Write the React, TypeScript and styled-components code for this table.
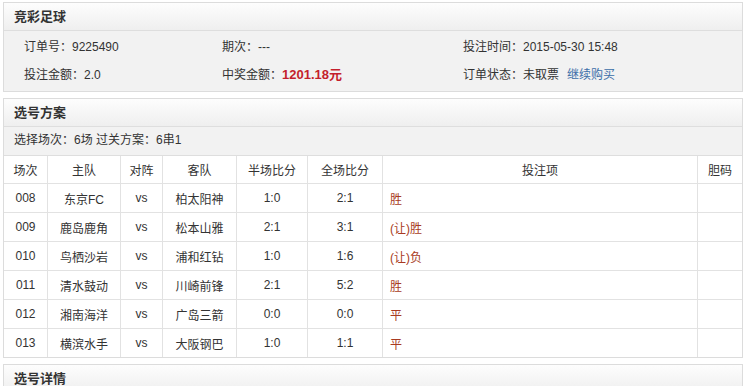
import React from 'react';
import styled, { createGlobalStyle } from 'styled-components';

const GlobalStyle = createGlobalStyle`
  html, body {
    margin: 0;
    padding: 0;
    background: #ffffff;
  }
  body {
    font-family: "Liberation Sans", "Noto Sans CJK SC", sans-serif;
    font-size: 12px;
    color: #333;
  }
`;

const Page = styled.div`
  padding: 2px 2px 0 3px;
  display: flex;
  flex-direction: column;
  gap: 6px;
`;

const Panel = styled.div`
  border: 1px solid #dcdcdc;
  background: #f2f2f2;
`;

const PanelTitle = styled.div`
  height: 27px;
  line-height: 27px;
  padding-left: 10px;
  font-weight: bold;
  font-size: 13px;
  color: #333;
  background: linear-gradient(#fdfdfd, #efefef);
  border-bottom: 1px solid #dedede;
`;

const InfoGrid = styled.div`
  display: grid;
  grid-template-columns: 198px 241px 1fr;
  padding: 2px 0 2px 20px;
`;

const InfoCell = styled.div`
  height: 28px;
  line-height: 28px;
`;

const Prize = styled.span`
  color: #c41f2c;
  font-weight: bold;
  font-size: 13px;
`;

const BuyLink = styled.a`
  color: #3b6ea8;
  text-decoration: none;
  margin-left: 8px;
`;

const SubLine = styled.div`
  height: 28px;
  line-height: 27px;
  padding-left: 10px;
  border-bottom: 1px solid #dedede;
`;

const Table = styled.table`
  width: 100%;
  border-collapse: collapse;
  table-layout: fixed;
  background: #fff;
`;

const Th = styled.th<{ $w?: number }>`
  width: ${(p) => (p.$w ? `${p.$w}px` : 'auto')};
  height: 27px;
  font-weight: normal;
  text-align: center;
  border-right: 1px solid #e2e2e2;
  border-bottom: 1px solid #e2e2e2;
  padding: 0;
  &:last-child {
    border-right: none;
  }
`;

const Td = styled.td<{ $bet?: boolean }>`
  height: 28px;
  padding: ${(p) => (p.$bet ? '0 0 0 7px' : '0')};
  text-align: ${(p) => (p.$bet ? 'left' : 'center')};
  color: ${(p) => (p.$bet ? '#a83a22' : '#333')};
  border-right: 1px solid #e2e2e2;
  border-bottom: 1px solid #e2e2e2;
  &:last-child {
    border-right: none;
  }
`;

const Row = styled.tr`
  &:last-child td {
    border-bottom: none;
  }
`;

const matches = [
  { no: '008', home: '东京FC', away: '柏太阳神', half: '1:0', full: '2:1', bet: '胜' },
  { no: '009', home: '鹿岛鹿角', away: '松本山雅', half: '2:1', full: '3:1', bet: '(让)胜' },
  { no: '010', home: '鸟栖沙岩', away: '浦和红钻', half: '1:0', full: '1:6', bet: '(让)负' },
  { no: '011', home: '清水鼓动', away: '川崎前锋', half: '2:1', full: '5:2', bet: '胜' },
  { no: '012', home: '湘南海洋', away: '广岛三箭', half: '0:0', full: '0:0', bet: '平' },
  { no: '013', home: '横滨水手', away: '大阪钢巴', half: '1:0', full: '1:1', bet: '平' },
];

export default function App() {
  return (
    <>
      <GlobalStyle />
      <Page>
        <Panel>
          <PanelTitle>竞彩足球</PanelTitle>
          <InfoGrid>
            <InfoCell>订单号：9225490</InfoCell>
            <InfoCell>期次：---</InfoCell>
            <InfoCell>投注时间：2015-05-30 15:48</InfoCell>
            <InfoCell>投注金额：2.0</InfoCell>
            <InfoCell>
              中奖金额：<Prize>1201.18元</Prize>
            </InfoCell>
            <InfoCell>
              订单状态：未取票<BuyLink href="#">继续购买</BuyLink>
            </InfoCell>
          </InfoGrid>
        </Panel>

        <Panel>
          <PanelTitle>选号方案</PanelTitle>
          <SubLine>选择场次：6场 过关方案：6串1</SubLine>
          <Table>
            <thead>
              <tr>
                <Th $w={43}>场次</Th>
                <Th $w={72}>主队</Th>
                <Th $w={41}>对阵</Th>
                <Th $w={73}>客队</Th>
                <Th $w={70}>半场比分</Th>
                <Th $w={74}>全场比分</Th>
                <Th>投注项</Th>
                <Th $w={44}>胆码</Th>
              </tr>
            </thead>
            <tbody>
              {matches.map((m) => (
                <Row key={m.no}>
                  <Td>{m.no}</Td>
                  <Td>{m.home}</Td>
                  <Td>vs</Td>
                  <Td>{m.away}</Td>
                  <Td>{m.half}</Td>
                  <Td>{m.full}</Td>
                  <Td $bet>{m.bet}</Td>
                  <Td></Td>
                </Row>
              ))}
            </tbody>
          </Table>
        </Panel>

        <Panel>
          <PanelTitle>选号详情</PanelTitle>
        </Panel>
      </Page>
    </>
  );
}
